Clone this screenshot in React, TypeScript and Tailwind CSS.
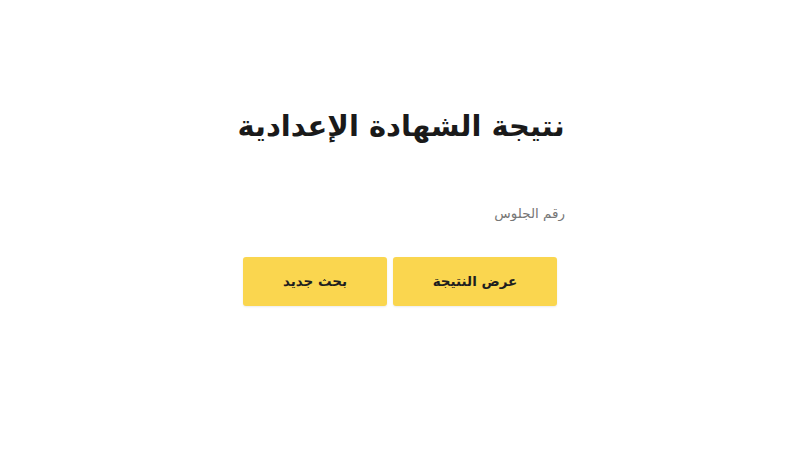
export default function App() {
  return (
    <div
      dir="rtl"
      className="w-[800px] h-[450px] bg-white flex flex-col items-center pt-[105px]"
      style={{ fontFamily: '"DejaVu Sans", "Noto Sans", sans-serif' }}
    >
      <h1 className="text-[29px] font-bold text-[#1a1a1a] leading-[42px] ml-[2px]">
        نتيجة الشهادة الإعدادية
      </h1>

      <div className="w-[326px] mt-[54px] ml-[4px]">
        <input
          type="text"
          placeholder="رقم الجلوس"
          className="w-full bg-transparent outline-none text-[13.5px] text-[#333] placeholder-[#777] leading-[20px]"
        />
      </div>

      <div className="flex gap-[6px] mt-[32px]">
        <button className="w-[164px] h-[49px] bg-[#fad64f] rounded-[3px] text-[13.5px] font-bold text-[#1f1f1f] shadow-[0_1px_2px_rgba(0,0,0,0.08)]">
          عرض النتيجة
        </button>
        <button className="w-[144px] h-[49px] bg-[#fad64f] rounded-[3px] text-[13.5px] font-bold text-[#1f1f1f] shadow-[0_1px_2px_rgba(0,0,0,0.08)]">
          بحث جديد
        </button>
      </div>
    </div>
  );
}
